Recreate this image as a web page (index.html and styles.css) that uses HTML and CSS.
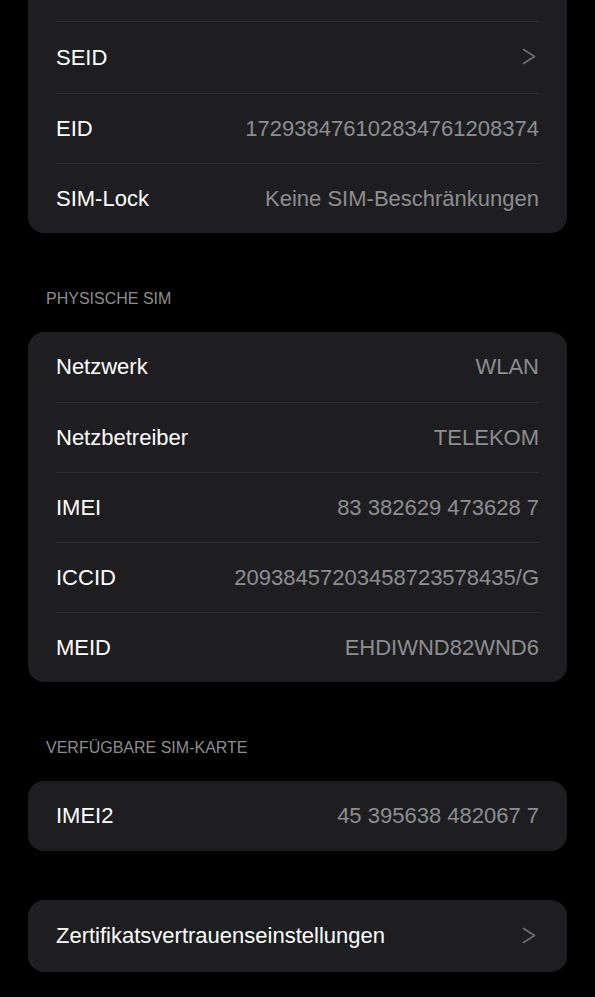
FILE: index.html
```html
<!DOCTYPE html>
<html lang="de">
<head>
<meta charset="utf-8">
<link rel="stylesheet" href="styles.css">
</head>
<body>
<div class="page">
  <div class="card card-first">
    <div class="row row-top"></div>
    <div class="row">
      <span class="label">SEID</span>
      <svg class="chev" width="14" height="17" viewBox="0 0 14 17"><path d="M1.5 1.5 L12.5 8.5 L1.5 15.5" fill="none" stroke="currentColor" stroke-width="1.6" stroke-linecap="round" stroke-linejoin="round"/></svg>
    </div>
    <div class="row">
      <span class="label">EID</span>
      <span class="value">172938476102834761208374</span>
    </div>
    <div class="row">
      <span class="label">SIM-Lock</span>
      <span class="value">Keine SIM-Beschränkungen</span>
    </div>
  </div>

  <div class="section-title">PHYSISCHE SIM</div>
  <div class="card">
    <div class="row"><span class="label">Netzwerk</span><span class="value">WLAN</span></div>
    <div class="row"><span class="label">Netzbetreiber</span><span class="value">TELEKOM</span></div>
    <div class="row"><span class="label">IMEI</span><span class="value">83 382629 473628 7</span></div>
    <div class="row"><span class="label">ICCID</span><span class="value">20938457203458723578435/G</span></div>
    <div class="row"><span class="label">MEID</span><span class="value">EHDIWND82WND6</span></div>
  </div>

  <div class="section-title">VERFÜGBARE SIM-KARTE</div>
  <div class="card">
    <div class="row"><span class="label">IMEI2</span><span class="value">45 395638 482067 7</span></div>
  </div>

  <div class="card card-last">
    <div class="row">
      <span class="label">Zertifikatsvertrauenseinstellungen</span>
      <svg class="chev" width="14" height="17" viewBox="0 0 14 17"><path d="M1.5 1.5 L12.5 8.5 L1.5 15.5" fill="none" stroke="currentColor" stroke-width="1.6" stroke-linecap="round" stroke-linejoin="round"/></svg>
    </div>
  </div>
</div>
</body>
</html>
```
FILE: styles.css
```css
html, body {
  margin: 0;
  padding: 0;
  background: #000;
}
body {
  font-family: "Liberation Sans", Arial, sans-serif;
}
.page {
  width: 595px;
  height: 997px;
  overflow: hidden;
  padding: 0 28px;
  box-sizing: border-box;
}
.card {
  background: #1e1e20;
  border-radius: 16px;
  padding: 0 28px;
}
.card-first {
  margin-top: -51px;
  border-radius: 0 0 16px 16px;
}
.row {
  height: 70px;
  display: flex;
  align-items: center;
  justify-content: space-between;
  border-top: 1px solid #2c2c2e;
  box-sizing: border-box;
}
.card .row:first-child {
  border-top: none;
}
.row-top {
  height: 72px;
}
.card-first .row-top + .row {
  height: 72px;
}
.label {
  color: #ffffff;
  font-size: 22px;
  line-height: 26px;
}
.value {
  color: #8d8d92;
  font-size: 22px;
  line-height: 26px;
}
.chev {
  color: #6d6d72;
  margin-right: 3px;
  margin-top: -2px;
}
.section-title {
  color: #8d8d92;
  font-size: 16px;
  line-height: 18px;
  padding: 57px 0 0 18px;
  height: 99px;
  box-sizing: border-box;
}
.card-last {
  margin-top: 49px;
}
.card-last .row {
  height: 72px;
}
```
